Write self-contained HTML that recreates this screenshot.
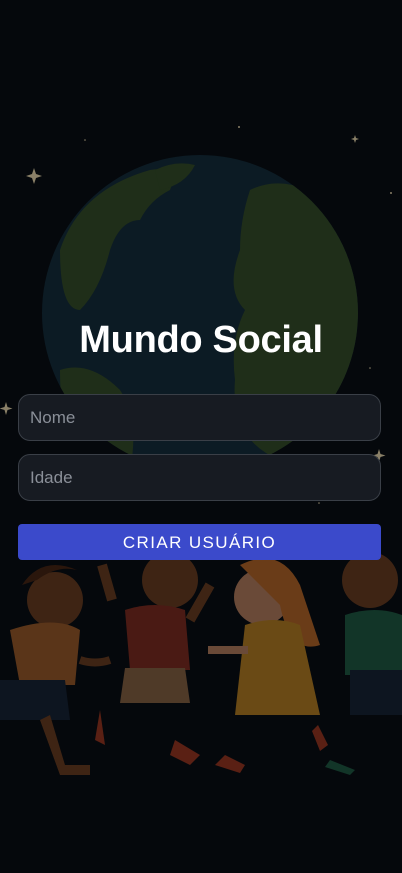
<!DOCTYPE html>
<html><head><meta charset="utf-8"><style>
html,body{margin:0;padding:0;background:#05080c;width:402px;height:873px;overflow:hidden;font-family:"Liberation Sans",sans-serif}
.bg{position:absolute;left:0;top:0}
h1{position:absolute;left:0;width:402px;top:319px;margin:0;text-align:center;color:#fff;font-size:38px;font-weight:bold;letter-spacing:-0.3px}
.inp{position:absolute;left:18px;width:363px;height:47px;border:1px solid #3a3f47;border-radius:12px;background:#171b22;color:#8a8f98;font-size:17px;box-sizing:border-box;padding:13px 11px;line-height:20px}
.btn{position:absolute;left:18px;top:524px;width:363px;height:36px;background:#3b4acb;border-radius:4px;color:#fff;font-size:17px;letter-spacing:1.4px;text-align:center;line-height:37px;font-weight:500}
</style></head><body>
<svg class="bg" width="402" height="873" viewBox="0 0 402 873">
<rect width="402" height="873" fill="#05080c"/>
<g fill="#8a8068">
<path d="M34 168 l2 6 6 2 -6 2 -2 6 -2 -6 -6 -2 6 -2z"/>
<path d="M6 402 l1.5 5 5 1.5 -5 1.5 -1.5 5 -1.5 -5 -5 -1.5 5 -1.5z"/>
<path d="M379 449 l1.5 5 5 1.5 -5 1.5 -1.5 5 -1.5 -5 -5 -1.5 5 -1.5z"/>
<path d="M355 135 l1 3 3 1 -3 1 -1 3 -1 -3 -3 -1 3 -1z"/>
<circle cx="239" cy="127" r="1"/><circle cx="391" cy="193" r="1"/><circle cx="85" cy="140" r="0.8"/><circle cx="319" cy="503" r="0.8"/><circle cx="370" cy="368" r="0.8"/>
</g>
<defs><clipPath id="g"><circle cx="200" cy="313" r="158"/></clipPath></defs>
<circle cx="200" cy="313" r="158" fill="#0c1b24"/>
<g clip-path="url(#g)" fill="#1f2e19">
<path d="M60 250 q20-60 90-80 q30-5 20 20 q-20 10-30 30 q-20 0-30 30 q-10 40-30 60 q-20 0-20-60z"/>
<path d="M155 170 q20-10 40-5 q-10 20-35 25z"/>
<path d="M250 190 q40-20 90 20 q20 40 20 80 l-10 140 q-40 30-70 30 q-50-20-45-80 q-5-40 10-70 q-20-20-5-60 q0-30 10-60z"/>
<path d="M60 370 q30-10 60 20 q20 30 10 80 l-40 10 q-30-30-30-110z"/>
</g>
<g>
<circle cx="55" cy="600" r="28" fill="#3e2414"/><path d="M22 585 q20-30 55-15 q-20-5-40 10z" fill="#2a160c"/>
<path d="M10 630 q45-15 70 0 l-5 55 h-55z" fill="#5a3519"/>
<path d="M0 680 h65 l5 40 h-70z" fill="#0d1520"/>
<path d="M50 715 l15 50 h25 v10 h-30 l-20-55z" fill="#3e2414"/>
<path d="M80 660 q15 5 30 0" stroke="#3e2414" stroke-width="8" fill="none"/>
<circle cx="170" cy="580" r="28" fill="#3e2414"/>
<path d="M125 610 q30-10 60 0 l5 60 h-60z" fill="#4a1a14"/>
<path d="M125 668 h60 l5 35 h-70z" fill="#4f3a28"/>
<path d="M112 600 l-10-35" stroke="#3e2414" stroke-width="10"/>
<path d="M190 620 l20-35" stroke="#3e2414" stroke-width="10"/>
<path d="M100 710 l-5 30 l10 5z" fill="#5a2014"/><path d="M175 740 l25 15 -10 10 -20-10z" fill="#5a2014"/>
<circle cx="262" cy="597" r="28" fill="#6a4a38"/>
<path d="M240 565 q40-20 60 20 l20 60 q-30 10-40-40z" fill="#6a3c18"/>
<path d="M245 625 q30-10 55 0 l20 90 h-85z" fill="#6a4a15"/>
<path d="M208 650 h40" stroke="#6a4a38" stroke-width="8"/>
<path d="M225 755 l20 10 -5 8 -25-8z" fill="#5a2014"/><path d="M318 725 l10 20 -8 6 -8-20z" fill="#5a2014"/>
<circle cx="370" cy="580" r="28" fill="#3e2414"/>
<path d="M345 615 q30-10 57 0 v60 h-57z" fill="#123528"/>
<path d="M350 670 h52 v45 h-52z" fill="#0d1520"/>
<path d="M330 760 l25 10 -5 5 -25-8z" fill="#123528"/>
</g>
</svg>
<h1>Mundo Social</h1>
<div class="inp" style="top:394px">Nome</div>
<div class="inp" style="top:454px">Idade</div>
<div class="btn">CRIAR USUÁRIO</div>
</body></html>
